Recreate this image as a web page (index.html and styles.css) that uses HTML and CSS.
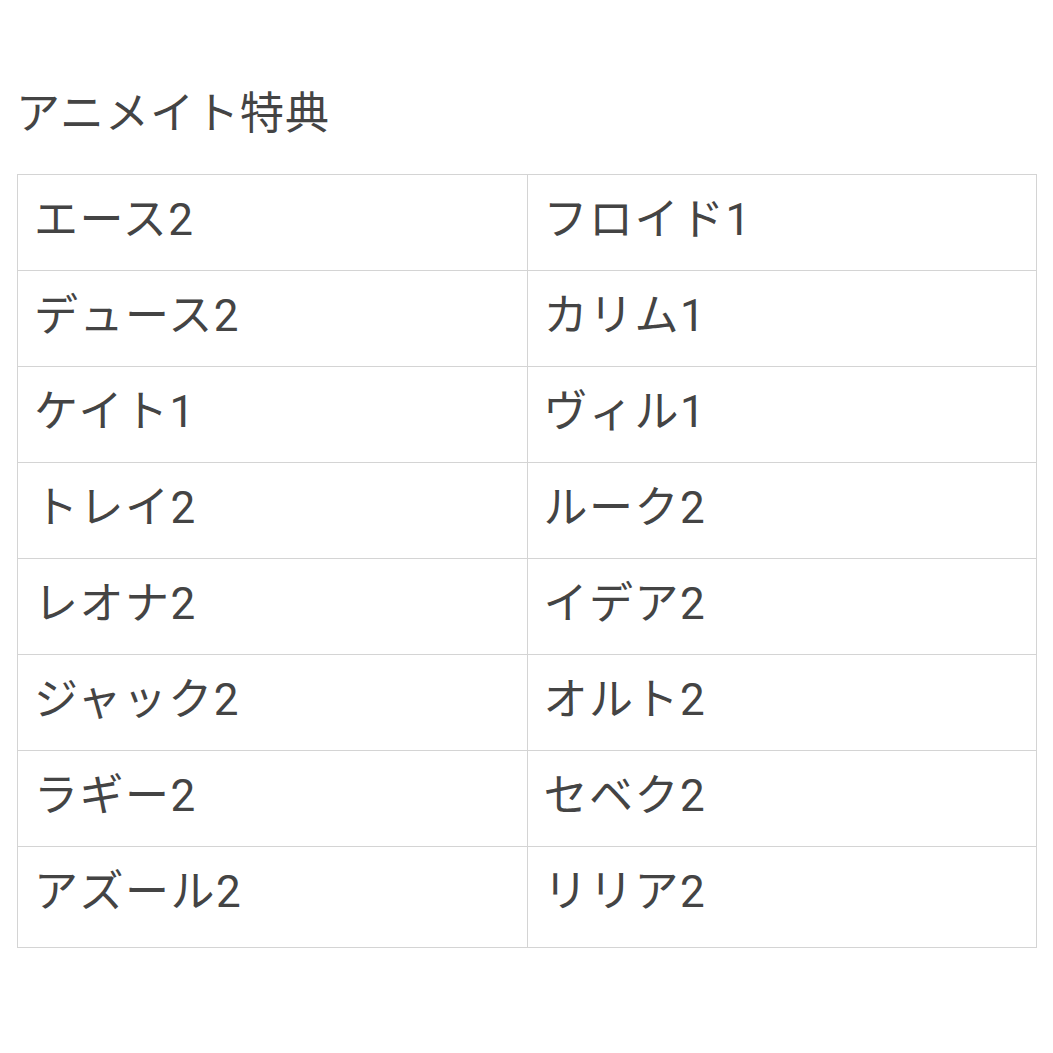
FILE: index.html
```html
<!DOCTYPE html>
<html lang="ja">
<head>
<meta charset="utf-8">
<link rel="stylesheet" href="styles.css">
</head>
<body>
<div class="page">
  <h2 class="title">アニメイト特典</h2>
  <table class="list">
    <tr><td>エース2</td><td>フロイド1</td></tr>
    <tr><td>デュース2</td><td>カリム1</td></tr>
    <tr><td>ケイト1</td><td>ヴィル1</td></tr>
    <tr><td>トレイ2</td><td>ルーク2</td></tr>
    <tr><td>レオナ2</td><td>イデア2</td></tr>
    <tr><td>ジャック2</td><td>オルト2</td></tr>
    <tr><td>ラギー2</td><td>セベク2</td></tr>
    <tr class="last"><td>アズール2</td><td>リリア2</td></tr>
  </table>
</div>
</body>
</html>
```
FILE: styles.css
```css
html, body {
  margin: 0;
  padding: 0;
  background: #fff;
}
.page {
  padding: 84px 16px 0 17px;
  font-family: Roboto, "Noto Sans CJK JP", "Noto Sans", sans-serif;
  color: #444;
}
.title {
  margin: 0 0 30px -1px;
  font-size: 44px;
  font-weight: 400;
  line-height: 60px;
  letter-spacing: 1px;
}
.list {
  width: 1020px;
  border-collapse: collapse;
  table-layout: fixed;
}
.list td {
  border: 1px solid #d4d4d4;
  height: 96px;
  padding: 0 0 5px 16px;
  font-size: 44px;
  line-height: 60px;
  letter-spacing: 1.5px;
  vertical-align: middle;
  box-sizing: border-box;
}
.list tr.last td {
  height: 101px;
  padding-bottom: 11px;
}
```
